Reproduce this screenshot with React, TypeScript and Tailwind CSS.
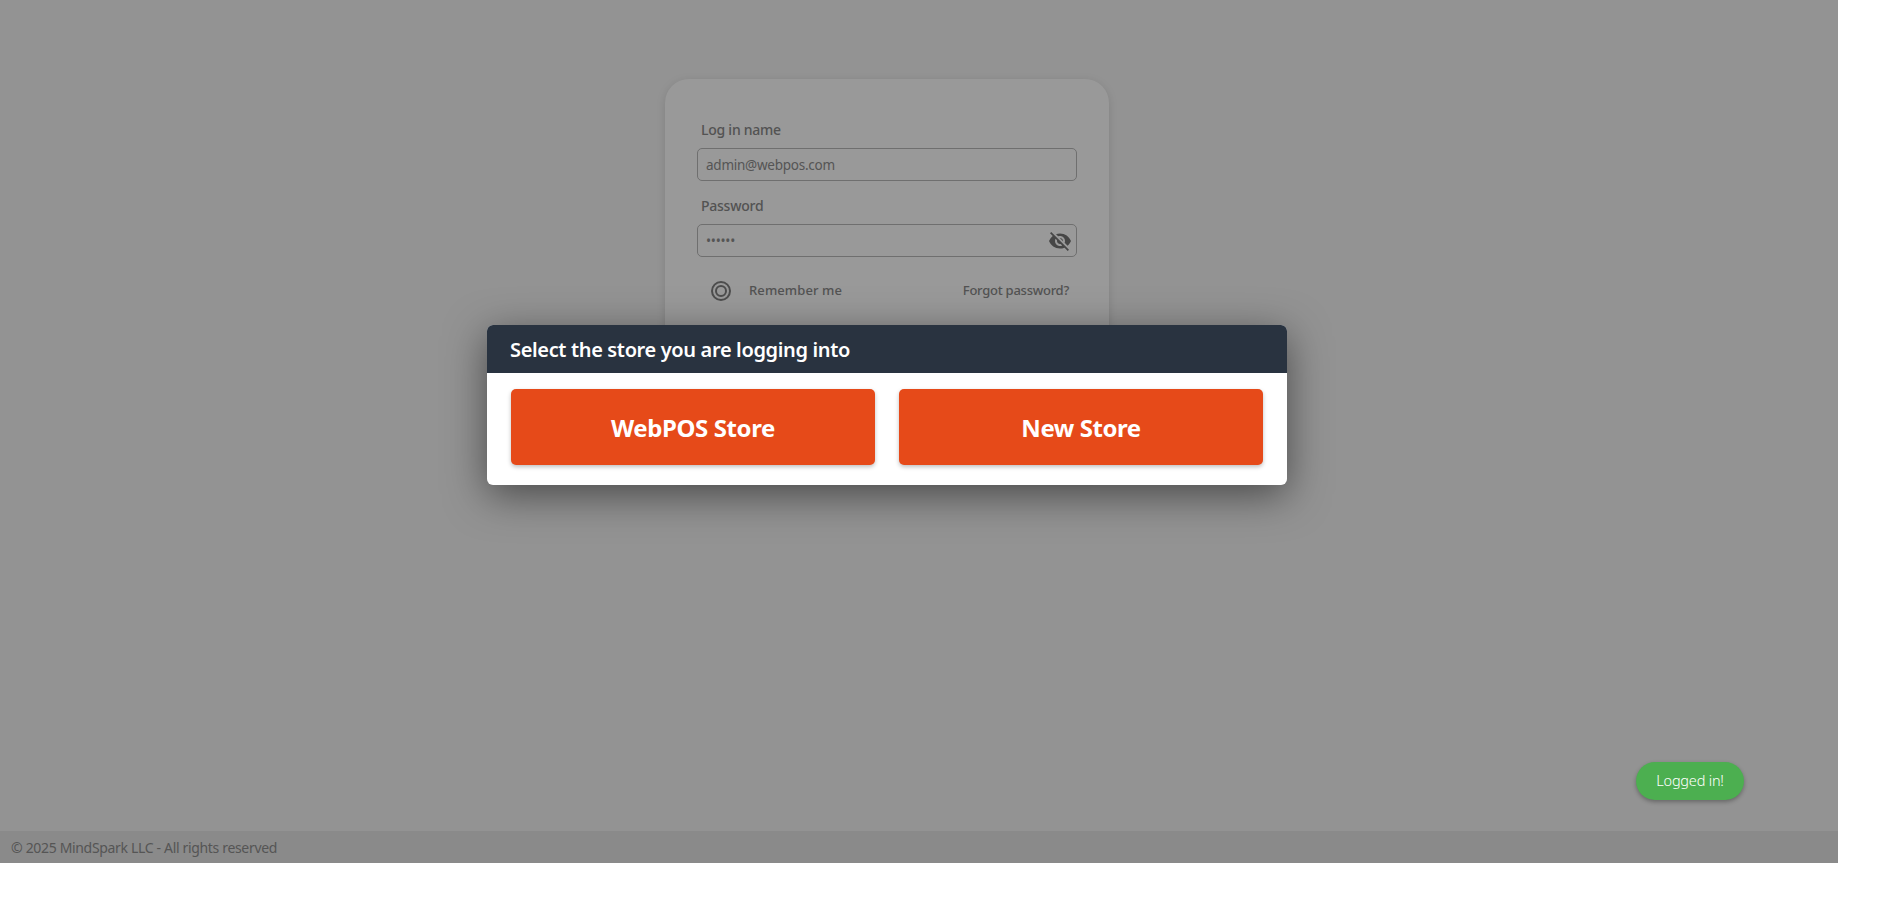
import { MdVisibilityOff } from 'react-icons/md';

const font = { fontFamily: '"Noto Sans", sans-serif' };

function Field({ label, value, children }: { label: string; value: string; children?: React.ReactNode }) {
  return (
    <div>
      <label className="block pl-1 text-[14px] leading-[19px] font-medium tracking-[-0.25px] text-[#8a8a8a]">{label}</label>
      <div className="mt-[9px] flex h-[33px] items-center justify-between rounded-[5px] border border-[#b9b9b9] pl-[8px] pr-[4px] text-[13.5px] tracking-[-0.25px] text-[#8e8e8e]">
        <span className="pt-[2px]">{value}</span>
        {children}
      </div>
    </div>
  );
}

export default function App() {
  return (
    <div className="relative flex h-[863px] w-[1838px] flex-col overflow-hidden bg-[#f5f5f5]" style={font}>
      <main className="flex-1 pt-[79px]">
        <div className="ml-[665px] h-[400px] w-[444px] rounded-[24px] bg-white p-[32px] pt-[41px] shadow-[0_2px_10px_rgba(0,0,0,0.12)]">
          <Field label="Log in name" value="admin@webpos.com" />
          <div className="mt-[15px]">
            <Field label="Password" value="••••••">
              <MdVisibilityOff size={24} className="text-[#757575]" />
            </Field>
          </div>
          <div className="mt-[24px] flex items-center justify-between pl-[14px] pr-[8px] text-[13px] font-medium text-[#8a8a8a]">
            <div className="flex items-center gap-[18px]">
              <span className="flex h-[20px] w-[20px] items-center justify-center rounded-full border-2 border-[#808080]">
                <span className="h-[12px] w-[12px] rounded-full border-2 border-[#808080]" />
              </span>
              <span className="tracking-[0.1px]">Remember me</span>
            </div>
            <span className="tracking-[-0.25px]">Forgot password?</span>
          </div>
        </div>
      </main>
      <footer className="flex h-[32px] items-center bg-[#e6e6e6] px-[11px] text-[14px] tracking-[-0.33px] text-[#8e8e8e]">© 2025 MindSpark LLC - All rights reserved</footer>

      <div className="absolute inset-0 bg-black/40" />

      <div className="absolute left-[487px] top-[325px] w-[800px] overflow-hidden rounded-[6px] bg-white shadow-[0_10px_40px_rgba(0,0,0,0.5)]">
        <div className="flex h-[48px] items-center bg-[#293340] px-[23px] pt-[2px] text-[20px] font-semibold tracking-[-0.35px] text-white">Select the store you are logging into</div>
        <div className="flex gap-[24px] px-[24px] pt-[16px] pb-[20px]">
          <button className="h-[76px] flex-1 rounded-[5px] bg-[#e64a19] pt-[2px] text-[24px] font-bold tracking-[-0.4px] text-white shadow-[0_2px_4px_rgba(0,0,0,0.25)]">WebPOS Store</button>
          <button className="h-[76px] flex-1 rounded-[5px] bg-[#e64a19] pt-[2px] text-[24px] font-bold tracking-[-0.45px] text-white shadow-[0_2px_4px_rgba(0,0,0,0.25)]">New Store</button>
        </div>
      </div>

      <div className="absolute left-[1636px] top-[762px] flex h-[38px] w-[108px] items-center justify-center rounded-full bg-[#4caf50] text-[14.5px] font-light tracking-[-0.2px] text-white shadow-[0_2px_4px_rgba(0,0,0,0.3)]">Logged in!</div>
    </div>
  );
}
